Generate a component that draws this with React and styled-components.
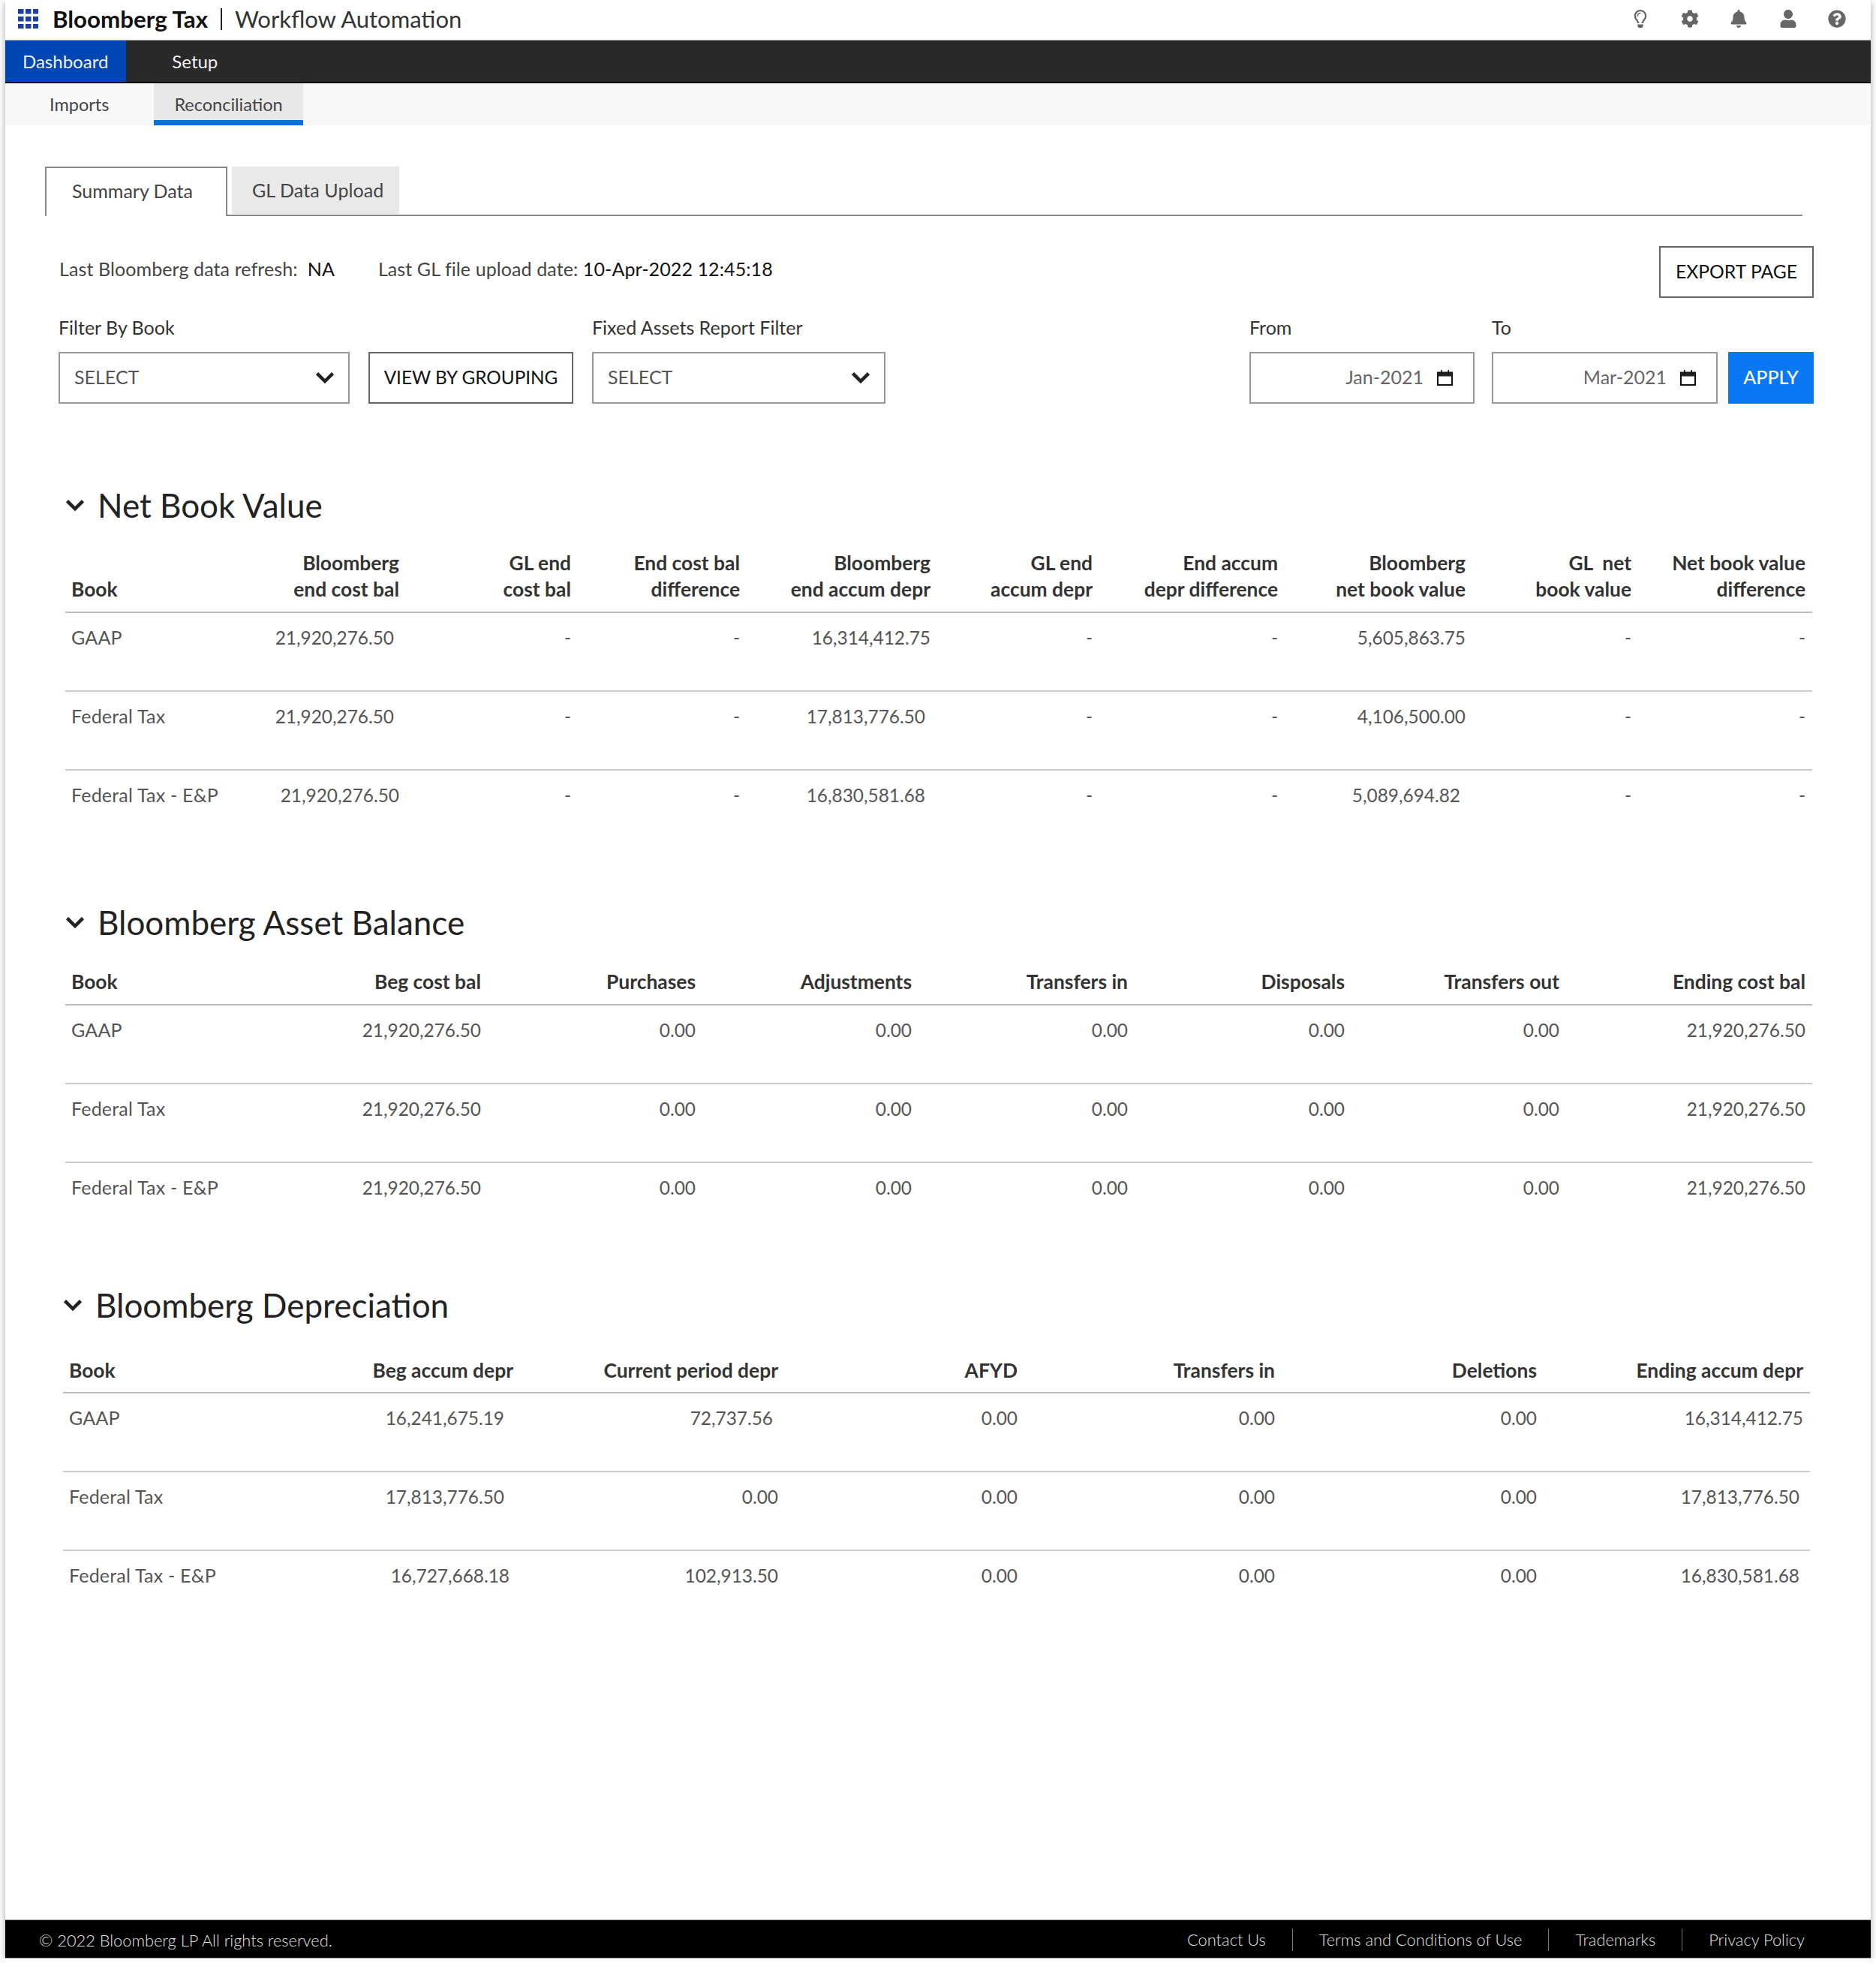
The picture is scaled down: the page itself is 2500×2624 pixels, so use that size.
import styled, { createGlobalStyle } from 'styled-components';
import { FaCog, FaBell, FaUser, FaQuestionCircle, FaRegLightbulb } from 'react-icons/fa';

const GlobalStyle = createGlobalStyle`
  html, body { margin: 0; padding: 0; background: #fff; }
  body { font-family: Lato, "Open Sans", "Liberation Sans", sans-serif; color: #333; }
  * { box-sizing: border-box; }
`;

const Frame = styled.div`
  width: 2486px;
  height: 2610px;
  margin-left: 7px;
  display: flex;
  flex-direction: column;
  background: #fff;
  box-shadow: 0 3px 9px rgba(0, 0, 0, 0.35);
`;

const TopBar = styled.header`
  height: 53px;
  padding: 0 33px 3px 17px;
  display: flex;
  align-items: center;
  flex-shrink: 0;
`;

const Brand = styled.span`
  margin-left: 19px;
  font-size: 31.3px;
  font-weight: 700;
  color: #111;
`;

const BrandDivider = styled.span`
  width: 2px;
  height: 29px;
  margin: 0 17px;
  background: #222;
`;

const Product = styled.span`
  font-size: 31px;
  color: #333;
`;

const IconRow = styled.div`
  margin-left: auto;
  display: flex;
  align-items: center;
  gap: 41.5px;
  color: #666;
  font-size: 24px;

  svg { display: block; }
`;

const MainNav = styled.nav`
  height: 58px;
  display: flex;
  flex-shrink: 0;
  background: #292929;
  border-top: 1px solid #aaa;
  border-bottom: 2px solid #000;
`;

const MainNavItem = styled.a`
  display: flex;
  align-items: center;
  padding: ${p => (p.$active ? '0 24px 0 23px' : '0 0 0 61px')};
  background: ${p => (p.$active ? '#0047b3' : 'transparent')};
  color: #f0f0f0;
  font-size: 24px;
`;

const SubNav = styled.nav`
  height: 56px;
  display: flex;
  flex-shrink: 0;
  background: #f8f8f8;
`;

const SubNavItem = styled.a`
  display: flex;
  align-items: center;
  height: 56px;
  margin-left: ${p => p.$offset}px;
  padding: 7px 27px 0;
  font-size: 23.5px;
  color: #444;
  background: ${p => (p.$active ? '#e8e8e8' : 'transparent')};
  border-bottom: 7px solid ${p => (p.$active ? '#0b6fe0' : 'transparent')};
`;

const Content = styled.main`
  flex: 1;
  padding: 55px 76px 0 53px;
`;

const TabStrip = styled.div`
  display: flex;
  align-items: flex-end;
  gap: 6px;
  height: 66px;
  margin-right: 15px;
  border-bottom: 2px solid #888;
`;

const Tab = styled.div`
  display: flex;
  align-items: center;
  font-size: 25px;
  color: #444;
  ${p => (p.$active
    ? `
    width: 243px;
    height: 66px;
    margin-bottom: -2px;
    padding: 0 0 5px 34px;
    background: #fff;
    border: 2px solid #888;
    border-bottom: 0;
  `
    : `
    width: 223px;
    height: 63px;
    margin-bottom: 1px;
    padding: 0 0 1px 27px;
    background: #e9e9e9;
    letter-spacing: 0.1px;
  `)}
`;

const InfoBar = styled.div`
  display: flex;
  justify-content: space-between;
  align-items: flex-start;
  margin-top: 40px;
  padding-left: 19px;
`;

const InfoText = styled.div`
  display: flex;
  gap: 58px;
  margin-top: 13px;
  font-size: 25px;
  letter-spacing: 0.1px;
  line-height: 34px;
  color: #444;

  b {
    font-weight: 400;
    color: #111;
  }
`;

const OutlineButton = styled.button`
  width: ${p => p.$width}px;
  height: 69px;
  padding: 0 0 3px;
  flex-shrink: 0;
  background: #fff;
  border: 2px solid #666;
  font-family: inherit;
  font-size: ${p => p.$size}px;
  color: #111;
`;

const FilterRow = styled.div`
  display: flex;
  margin-top: 25px;
  padding-left: 18px;
`;

const Field = styled.div`
  display: flex;
  flex-direction: column;
  margin-left: ${p => p.$gap || 0}px;
  ${p => p.$push && 'margin-left: auto;'}
`;

const FieldLabel = styled.label`
  height: 47px;
  font-size: 25px;
  line-height: 28px;
  color: #333;
`;

const SelectBox = styled.div`
  width: ${p => p.$width}px;
  height: 69px;
  padding: 0 18px 0 19px;
  display: flex;
  align-items: center;
  justify-content: space-between;
  border: 2px solid #999;
  font-size: 25px;
  color: #555;

  span { padding-bottom: 3px; }
`;

const DateBox = styled.div`
  width: ${p => p.$width}px;
  height: 69px;
  padding-right: 27px;
  display: flex;
  align-items: center;
  justify-content: flex-end;
  gap: 18px;
  border: 2px solid #999;
  font-size: 25px;
  color: #666;

  span { padding-bottom: 3px; }
`;

const ApplyButton = styled.button`
  width: 114px;
  height: 69px;
  margin-left: 14px;
  align-self: flex-end;
  padding: 0 0 3px;
  background: #0a78f5;
  border: 0;
  font-family: inherit;
  font-size: 25px;
  font-weight: 500;
  color: #fff;
`;

const Section = styled.section`
  margin: ${p => p.$top}px 0 0 ${p => p.$left}px;
  width: 2328px;
`;

const SectionTitle = styled.h2`
  display: flex;
  align-items: center;
  gap: 17px;
  height: 60px;
  margin: 0 0 ${p => p.$gap}px;
  font-size: 44px;
  font-weight: 400;
  color: #222;
`;

const HeadRow = styled.div`
  display: grid;
  grid-template-columns: ${p => p.$cols};
  align-items: end;
  padding-bottom: ${p => p.$pad}px;
  border-bottom: 2px solid #bbb;
`;

const HeadCell = styled.div`
  padding: 0 9px 0 8px;
  font-size: 26.4px;
  line-height: 35px;
  font-weight: 700;
  color: #333;
  text-align: ${p => (p.$left ? 'left' : 'right')};
  white-space: pre;
`;

const BodyRow = styled.div`
  display: grid;
  grid-template-columns: ${p => p.$cols};
  height: 105px;
  padding-top: 15px;
  border-bottom: 2px solid ${p => (p.$last ? 'transparent' : '#ccc')};
`;

const BodyCell = styled.div`
  padding: 0 ${p => 9 + (p.$inset || 0)}px 0 8px;
  font-size: ${p => (p.$left ? '25px' : '24.4px')};
  letter-spacing: ${p => (p.$left ? '0.2px' : '0')};
  line-height: 35px;
  color: #555;
  text-align: ${p => (p.$left ? 'left' : 'right')};
  white-space: nowrap;
`;

const Footer = styled.footer`
  height: 52px;
  padding: 2px 52px 0 45px;
  display: flex;
  align-items: center;
  justify-content: space-between;
  flex-shrink: 0;
  background: #000;
  border-top: 1px solid #999;
  border-bottom: 1px solid #999;
  font-size: 21.8px;
  font-weight: 300;
  color: #e4e4e4;
`;

const FooterLinks = styled.div`
  display: flex;
`;

const FooterLink = styled.a`
  padding: 0 35px;
  line-height: 30px;
  border-right: 1px solid ${p => (p.$last ? 'transparent' : '#777')};
`;

const GridLogo = () => (
  <svg width="27" height="26" viewBox="0 0 27 26">
    {[0, 10, 20].flatMap(y => [0, 10, 20].map(x => (
      <rect key={`${x}-${y}`} x={x} y={y} width="7.5" height="6.5" fill="#1f3f9e" />
    )))}
  </svg>
);

const Chevron = ({ size }) => (
  <svg width={size} height={size * 0.62} viewBox="0 0 26 16" fill="none">
    <polyline points="2.5,2.5 13,13 23.5,2.5" stroke="#222" strokeWidth="4.5" />
  </svg>
);

const CalendarIcon = () => (
  <svg width="21" height="21" viewBox="0 0 21 21">
    <rect x="1" y="3.5" width="19" height="16.5" fill="#fff" stroke="#111" strokeWidth="2" />
    <rect x="1" y="3.5" width="19" height="5" fill="#222" />
    <rect x="5" y="0" width="1.5" height="6" fill="#111" />
    <rect x="14.5" y="0" width="1.5" height="6" fill="#111" />
  </svg>
);

const tables = [
  {
    top: 105,
    left: 27,
    gap: 30,
    pad: 12,
    cols: '213px 241px 229px 225px 254px 216px 247px 250px 221px 232px',
    head: ['Book', 'Bloomberg\nend cost bal', 'GL end\ncost bal', 'End cost bal\ndifference', 'Bloomberg\nend accum depr',
      'GL end\naccum depr', 'End accum\ndepr difference', 'Bloomberg\nnet book value', 'GL  net\nbook value', 'Net book value\ndifference'],
    rows: [
      ['GAAP', ['21,920,276.50', 7], '-', '-', '16,314,412.75', '-', '-', '5,605,863.75', '-', '-'],
      ['Federal Tax', ['21,920,276.50', 7], '-', '-', ['17,813,776.50', 7], '-', '-', '4,106,500.00', '-', '-'],
      ['Federal Tax - E&P', '21,920,276.50', '-', '-', ['16,830,581.68', 7], '-', '-', ['5,089,694.82', 7], '-', '-'],
    ],
  },
  {
    top: 67,
    left: 27,
    gap: 32,
    pad: 12,
    cols: '263px 300px 286px 288px 288px 289px 286px 328px',
    head: ['Book', 'Beg cost bal', 'Purchases', 'Adjustments', 'Transfers in', 'Disposals', 'Transfers out', 'Ending cost bal'],
    rows: [
      ['GAAP', '21,920,276.50', '0.00', '0.00', '0.00', '0.00', '0.00', '21,920,276.50'],
      ['Federal Tax', '21,920,276.50', '0.00', '0.00', '0.00', '0.00', '0.00', '21,920,276.50'],
      ['Federal Tax - E&P', '21,920,276.50', '0.00', '0.00', '0.00', '0.00', '0.00', '21,920,276.50'],
    ],
  },
  {
    top: 54,
    left: 24,
    gap: 40,
    pad: 11,
    cols: '246px 363px 353px 319px 343px 349px 355px',
    head: ['Book', 'Beg accum depr', 'Current period depr', 'AFYD', 'Transfers in', 'Deletions', 'Ending accum depr'],
    rows: [
      ['GAAP', ['16,241,675.19', 12], ['72,737.56', 7], '0.00', '0.00', '0.00', '16,314,412.75'],
      ['Federal Tax', ['17,813,776.50', 12], '0.00', '0.00', '0.00', '0.00', ['17,813,776.50', 5]],
      ['Federal Tax - E&P', ['16,727,668.18', 5], '102,913.50', '0.00', '0.00', '0.00', ['16,830,581.68', 5]],
    ],
  },
];

const titles = ['Net Book Value', 'Bloomberg Asset Balance', 'Bloomberg Depreciation'];

function DataTable({ table, title }) {
  return (
    <Section $top={table.top} $left={table.left}>
      <SectionTitle $gap={table.gap}><Chevron size={26} />{title}</SectionTitle>
      <HeadRow $cols={table.cols} $pad={table.pad}>
        {table.head.map((label, i) => <HeadCell key={label} $left={i === 0}>{label}</HeadCell>)}
      </HeadRow>
      {table.rows.map((row, r) => (
        <BodyRow key={row[0]} $cols={table.cols} $last={r === table.rows.length - 1}>
          {row.map((cell, i) => {
            const [value, inset] = Array.isArray(cell) ? cell : [cell, 0];
            return <BodyCell key={i} $left={i === 0} $inset={inset}>{value}</BodyCell>;
          })}
        </BodyRow>
      ))}
    </Section>
  );
}

export default function App() {
  return (
    <Frame>
      <GlobalStyle />
      <TopBar>
        <GridLogo />
        <Brand>Bloomberg Tax</Brand>
        <BrandDivider />
        <Product>Workflow Automation</Product>
        <IconRow>
          <FaRegLightbulb />
          <FaCog />
          <FaBell />
          <FaUser />
          <FaQuestionCircle />
        </IconRow>
      </TopBar>
      <MainNav>
        <MainNavItem $active>Dashboard</MainNavItem>
        <MainNavItem>Setup</MainNavItem>
      </MainNav>
      <SubNav>
        <SubNavItem $offset={32}>Imports</SubNavItem>
        <SubNavItem $offset={33} $active>Reconciliation</SubNavItem>
      </SubNav>
      <Content>
        <TabStrip>
          <Tab $active>Summary Data</Tab>
          <Tab>GL Data Upload</Tab>
        </TabStrip>
        <InfoBar>
          <InfoText>
            <span>Last Bloomberg data refresh:&nbsp; <b>NA</b></span>
            <span>Last GL file upload date: <b>10-Apr-2022 12:45:18</b></span>
          </InfoText>
          <OutlineButton $width={206} $size={24.7}>EXPORT PAGE</OutlineButton>
        </InfoBar>
        <FilterRow>
          <Field>
            <FieldLabel>Filter By Book</FieldLabel>
            <SelectBox $width={388}><span>SELECT</span> <Chevron size={26} /></SelectBox>
          </Field>
          <Field $gap={25}>
            <FieldLabel>&nbsp;</FieldLabel>
            <OutlineButton $width={273} $size={24.3}>VIEW BY GROUPING</OutlineButton>
          </Field>
          <Field $gap={25}>
            <FieldLabel>Fixed Assets Report Filter</FieldLabel>
            <SelectBox $width={391}><span>SELECT</span> <Chevron size={26} /></SelectBox>
          </Field>
          <Field $push>
            <FieldLabel>From</FieldLabel>
            <DateBox $width={300}><span>Jan-2021</span> <CalendarIcon /></DateBox>
          </Field>
          <Field $gap={23}>
            <FieldLabel>To</FieldLabel>
            <DateBox $width={301}><span>Mar-2021</span> <CalendarIcon /></DateBox>
          </Field>
          <ApplyButton>APPLY</ApplyButton>
        </FilterRow>
        {tables.map((table, i) => <DataTable key={titles[i]} table={table} title={titles[i]} />)}
      </Content>
      <Footer>
        <span>© 2022 Bloomberg LP All rights reserved.</span>
        <FooterLinks>
          <FooterLink>Contact Us</FooterLink>
          <FooterLink>Terms and Conditions of Use</FooterLink>
          <FooterLink>Trademarks</FooterLink>
          <FooterLink $last>Privacy Policy</FooterLink>
        </FooterLinks>
      </Footer>
    </Frame>
  );
}
